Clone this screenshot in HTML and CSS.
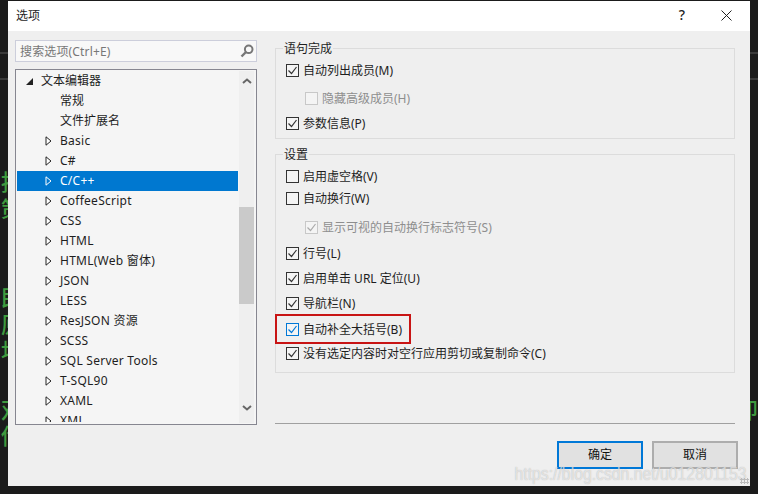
FILE: index.html
```html
<!DOCTYPE html>
<html lang="zh">
<head>
<meta charset="utf-8">
<title>选项</title>
<link rel="stylesheet" href="styles.css">
</head>
<body>
<div class="backdrop">
  <div class="strip strip-left">
    <i class="edge-line line-a"></i>
    <i class="edge-line line-b"></i>
    <span class="code c1">按</span>
    <span class="code c2">策</span>
    <span class="code c3">即</span>
    <span class="code c4">原</span>
    <span class="code c5">地</span>
    <span class="code c6">双</span>
    <span class="code c7">传</span>
  </div>
  <div class="strip strip-right">
    <i class="edge-line line-a"></i>
    <i class="edge-line line-b"></i>
    <span class="code c8">即</span>
  </div>
</div>
<div class="dialog">
  <header class="titlebar">
    <span class="title">选项</span>
    <span class="help">?</span>
    <svg class="close" width="11" height="11" viewBox="0 0 11 11"><path d="M.5.5l10 10M10.500.5l-10 10" stroke="#222" stroke-width="1" fill="none"/></svg>
  </header>
  <div class="content">
    <div class="left">
      <div class="search">
        <span class="placeholder">搜索选项(Ctrl+E)</span>
        <svg width="14" height="14" viewBox="0 0 14 14"><circle cx="8.700" cy="5.300" r="3.800" fill="none" stroke="#777" stroke-width="2"/><path d="M6 8L1.500 12.500" stroke="#777" stroke-width="2.400" fill="none"/></svg>
      </div>
      <div class="tree">
        <ul class="items">
          <li class="item"><svg class="tri" width="7" height="7" viewBox="0 0 7 7"><path d="M7 0v7H0z" fill="#222"/></svg><span class="lvl0">文本编辑器</span></li>
          <li class="item leaf">常规</li>
          <li class="item leaf">文件扩展名</li>
          <li class="item sub"><svg class="tri2" width="7" height="10" viewBox="0 0 7 10"><path d="M1 .8v8.400L6 5z" fill="#fff" stroke="#222"/></svg>Basic</li>
          <li class="item sub"><svg class="tri2" width="7" height="10" viewBox="0 0 7 10"><path d="M1 .8v8.400L6 5z" fill="#fff" stroke="#222"/></svg>C#</li>
          <li class="item sub selected"><svg class="tri2" width="7" height="10" viewBox="0 0 7 10"><path d="M1 .8v8.400L6 5z" fill="#0078d0" stroke="#fff"/></svg>C/C++</li>
          <li class="item sub"><svg class="tri2" width="7" height="10" viewBox="0 0 7 10"><path d="M1 .8v8.400L6 5z" fill="#fff" stroke="#222"/></svg>CoffeeScript</li>
          <li class="item sub"><svg class="tri2" width="7" height="10" viewBox="0 0 7 10"><path d="M1 .8v8.400L6 5z" fill="#fff" stroke="#222"/></svg>CSS</li>
          <li class="item sub"><svg class="tri2" width="7" height="10" viewBox="0 0 7 10"><path d="M1 .8v8.400L6 5z" fill="#fff" stroke="#222"/></svg>HTML</li>
          <li class="item sub"><svg class="tri2" width="7" height="10" viewBox="0 0 7 10"><path d="M1 .8v8.400L6 5z" fill="#fff" stroke="#222"/></svg>HTML(Web 窗体)</li>
          <li class="item sub"><svg class="tri2" width="7" height="10" viewBox="0 0 7 10"><path d="M1 .8v8.400L6 5z" fill="#fff" stroke="#222"/></svg>JSON</li>
          <li class="item sub"><svg class="tri2" width="7" height="10" viewBox="0 0 7 10"><path d="M1 .8v8.400L6 5z" fill="#fff" stroke="#222"/></svg>LESS</li>
          <li class="item sub"><svg class="tri2" width="7" height="10" viewBox="0 0 7 10"><path d="M1 .8v8.400L6 5z" fill="#fff" stroke="#222"/></svg>ResJSON 资源</li>
          <li class="item sub"><svg class="tri2" width="7" height="10" viewBox="0 0 7 10"><path d="M1 .8v8.400L6 5z" fill="#fff" stroke="#222"/></svg>SCSS</li>
          <li class="item sub"><svg class="tri2" width="7" height="10" viewBox="0 0 7 10"><path d="M1 .8v8.400L6 5z" fill="#fff" stroke="#222"/></svg>SQL Server Tools</li>
          <li class="item sub"><svg class="tri2" width="7" height="10" viewBox="0 0 7 10"><path d="M1 .8v8.400L6 5z" fill="#fff" stroke="#222"/></svg>T-SQL90</li>
          <li class="item sub"><svg class="tri2" width="7" height="10" viewBox="0 0 7 10"><path d="M1 .8v8.400L6 5z" fill="#fff" stroke="#222"/></svg>XAML</li>
          <li class="item sub"><svg class="tri2" width="7" height="10" viewBox="0 0 7 10"><path d="M1 .8v8.400L6 5z" fill="#fff" stroke="#222"/></svg>XML</li>
        </ul>
        <div class="scrollbar">
          <svg class="arrow" width="10" height="6" viewBox="0 0 10 6"><path d="M1 5l4-3.500L9 5" fill="none" stroke="#666" stroke-width="2"/></svg>
          <div class="thumb"></div>
          <svg class="arrow arrow-down" width="10" height="6" viewBox="0 0 10 6"><path d="M1 1l4 3.500L9 1" fill="none" stroke="#666" stroke-width="2"/></svg>
        </div>
      </div>
    </div>
    <div class="right">
      <fieldset class="group">
        <legend>语句完成</legend>
        <div class="row"><span class="box"><svg viewBox="0 0 13 13"><path d="M2.500 6.500l3 3 5-6.500" fill="none" stroke="#333" stroke-width="1.200"/></svg></span>自动列出成员(M)</div>
        <div class="row indent disabled mt8"><span class="box"></span>隐藏高级成员(H)</div>
        <div class="row mt5"><span class="box"><svg viewBox="0 0 13 13"><path d="M2.500 6.500l3 3 5-6.500" fill="none" stroke="#333" stroke-width="1.200"/></svg></span>参数信息(P)</div>
      </fieldset>
      <fieldset class="group settings">
        <legend>设置</legend>
        <div class="row"><span class="box"></span>启用虚空格(V)</div>
        <div class="row mt2"><span class="box"></span>自动换行(W)</div>
        <div class="row indent disabled mt9"><span class="box"><svg viewBox="0 0 13 13"><path d="M2.500 6.500l3 3 5-6.500" fill="none" stroke="#aaa" stroke-width="1.200"/></svg></span>显示可视的自动换行标志符号(S)</div>
        <div class="row mt6"><span class="box"><svg viewBox="0 0 13 13"><path d="M2.500 6.500l3 3 5-6.500" fill="none" stroke="#333" stroke-width="1.200"/></svg></span>行号(L)</div>
        <div class="row mt5"><span class="box"><svg viewBox="0 0 13 13"><path d="M2.500 6.500l3 3 5-6.500" fill="none" stroke="#333" stroke-width="1.200"/></svg></span>启用单击 URL 定位(U)</div>
        <div class="row mt5"><span class="box"><svg viewBox="0 0 13 13"><path d="M2.500 6.500l3 3 5-6.500" fill="none" stroke="#333" stroke-width="1.200"/></svg></span>导航栏(N)</div>
        <div class="row active mt6"><span class="box"><svg viewBox="0 0 13 13"><path d="M2.500 6.500l3 3 5-6.500" fill="none" stroke="#0078d7" stroke-width="1.200"/></svg></span>自动补全大括号(B)<i class="mark"></i></div>
        <div class="row mt4"><span class="box"><svg viewBox="0 0 13 13"><path d="M2.500 6.500l3 3 5-6.500" fill="none" stroke="#333" stroke-width="1.200"/></svg></span>没有选定内容时对空行应用剪切或复制命令(C)</div>
      </fieldset>
      <hr class="sep">
      <div class="buttons">
        <button class="btn primary" type="button">确定</button>
        <button class="btn" type="button">取消</button>
      </div>
    </div>
  </div>
  <span class="watermark">https://blog.csdn.net/u012801153</span>
  <i class="wm-dots"></i>
</div>
</body>
</html>
```
FILE: styles.css
```css
* { box-sizing: border-box; }
html, body { margin: 0; height: 100%; }
body {
  position: relative;
  width: 758px;
  height: 494px;
  overflow: hidden;
  padding: 1px 8px 0;
  background: #1b1b1b;
  font: 12px/20px "Noto Sans", "Noto Sans CJK SC", sans-serif;
  color: #1e1e1e;
}
.backdrop { position: absolute; inset: 0; }
.strip { position: absolute; top: 0; bottom: 0; width: 8px; overflow: hidden; }
.strip-left { left: 0; }
.strip-right { right: 0; }
.edge-line { position: absolute; left: 0; width: 8px; height: 2px; background: #3a3a3a; }
.line-a { top: 52px; }
.line-b { top: 78px; }
.code { position: absolute; left: 1px; font: 500 22px/26px "Noto Sans CJK SC", sans-serif; color: #3f9a3f; }
.c1 { top: 167px; }
.c2 { top: 194px; }
.c3 { top: 283px; }
.c4 { top: 310px; }
.c5 { top: 336px; }
.c6 { top: 395px; }
.c7 { top: 421px; }
.c8 { top: 395px; left: -14px; }

.dialog {
  position: relative;
  width: 742px;
  height: 485px;
  background: #efefef;
  overflow: hidden;
}
.titlebar {
  display: flex;
  align-items: center;
  height: 30px;
  padding: 0 18px 2px 8px;
  background: #fff;
}
.title { flex: 1; padding-top: 2px; }
.help { margin-right: 36px; font-size: 14px; font-weight: 500; color: #222; }

.content { display: flex; padding: 9px 0 0 7px; }
.left { width: 242px; display: flex; flex-direction: column; gap: 7px; }
.search {
  display: flex;
  align-items: center;
  justify-content: space-between;
  height: 22px;
  padding: 0 2px 0 4px;
  background: #f8f8f8;
  border: 1px solid #cccedb;
}
.placeholder { padding-top: 2px; color: #777; letter-spacing: .15px; }
.tree {
  display: flex;
  height: 356px;
  padding: 1px;
  background: #f5f5f5;
  border: 1px solid #868690;
}
.items { flex: 1; margin: 0; padding: 0; list-style: none; overflow: hidden; height: 351px; }
.item { display: flex; align-items: center; height: 20px; white-space: pre; }
.tri { margin: 0 8px 0 9px; }
.leaf { padding-left: 43px; }
.sub { padding-left: 28px; letter-spacing: .25px; }
.tri2 { margin-right: 8px; }
.selected { background: #0078d0; color: #fff; }
.scrollbar {
  display: flex;
  flex-direction: column;
  align-items: center;
  width: 15px;
  padding-top: 7px;
  margin: 0 1px 0 1px;
  background: #efefef;
}
.thumb { width: 15px; height: 97px; margin-top: 123px; background: #cacaca; }
.arrow-down { margin-top: 101px; }

.right { width: 463px; margin-left: 18px; }
.group {
  width: 460px;
  min-width: 0;
  margin: 0;
  padding: 4px 0 5px 10px;
  border: 1px solid #dcdcdc;
}
.group legend { margin-left: -3px; padding: 0 1px; height: 16px; line-height: 18px; }
.settings { margin-top: 7px; padding-bottom: 9px; }
.row { display: flex; align-items: center; height: 20px; padding-top: 2px; white-space: pre; position: relative; }
.box {
  flex: none;
  width: 13px;
  height: 13px;
  margin: -2px 4px 0 0;
  border: 1px solid #333;
  background: #f4f4f4;
}
.box svg { display: block; width: 13px; height: 13px; margin: -1px; }
.indent { padding-left: 19px; }
.disabled { color: #8e8e8e; }
.disabled .box { border-color: #c8c8c8; }
.active .box { border-color: #0078d7; }
.mark {
  position: absolute;
  left: -11px;
  top: -5px;
  width: 136px;
  height: 30px;
  border: 2px solid #c81414;
}
.mt2 { margin-top: 2px; }
.mt4 { margin-top: 4px; }
.mt5 { margin-top: 5px; }
.mt6 { margin-top: 6px; }
.mt8 { margin-top: 8px; }
.mt9 { margin-top: 9px; }
.sep { width: 460px; margin: 50px 0 0; border: 0; border-top: 1px solid #a0a0a0; }
.buttons { display: flex; justify-content: flex-end; gap: 9px; margin-top: 17px; }
.btn {
  width: 86px;
  height: 28px;
  padding: 0;
  background: #e1e1e1;
  border: 2px solid #adadad;
  font: inherit;
  color: #111;
}
.primary { border-color: #0078d7; }
.watermark {
  position: absolute;
  right: 3px;
  bottom: 0;
  font: 19px/24px "Liberation Sans", sans-serif;
  color: rgba(255,255,255,.6);
  text-shadow: 0 0 1px rgba(120,120,120,.55);
  white-space: nowrap;
  transform: scaleX(.83);
  transform-origin: right center;
}
.wm-dots {
  position: absolute;
  right: 1px;
  bottom: 2px;
  width: 9px;
  height: 6px;
  background: radial-gradient(circle, #bbb 1px, transparent 1.2px) 0 0 / 3px 3px;
}
```
